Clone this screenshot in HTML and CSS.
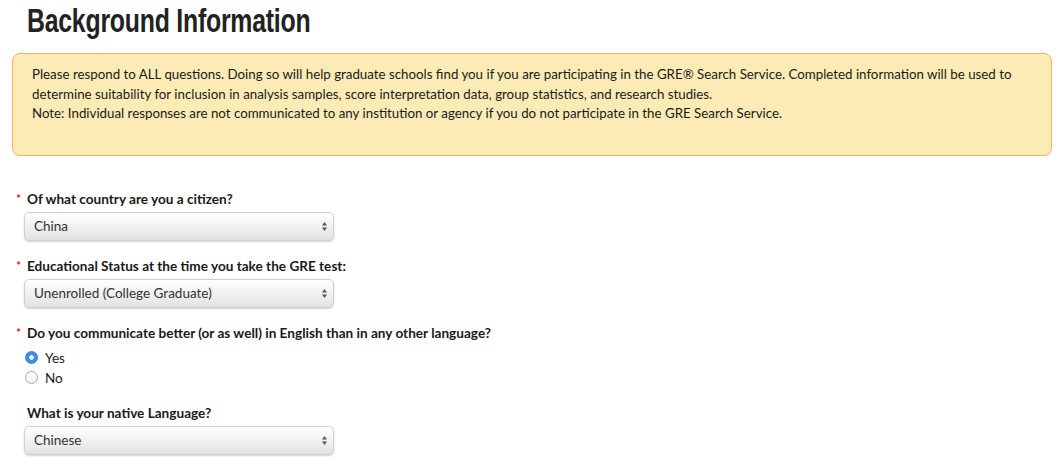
FILE: index.html
```html
<!DOCTYPE html>
<html>
<head>
<meta charset="utf-8">
<link rel="stylesheet" href="styles.css">
</head>
<body>
<div class="page">
  <h1 class="title"><span class="title-text">Background Information</span></h1>
  <div class="notice">
    <p>Please respond to ALL questions. Doing so will help graduate schools find you if you are participating in the GRE® Search Service. Completed information will be used to determine suitability for inclusion in analysis samples, score interpretation data, group statistics, and research studies.</p>
    <p>Note: Individual responses are not communicated to any institution or agency if you do not participate in the GRE Search Service.</p>
  </div>

  <div class="form">
    <div class="field">
      <div class="label"><span class="req">*</span>Of what country are you a citizen?</div>
      <div class="select"><span class="value">China</span>
        <svg class="arrows" width="5" height="9" viewBox="0 0 5 9"><path d="M2.5 0 L5 3.5 L0 3.5 Z M2.5 9 L5 5.5 L0 5.5 Z" fill="#555"/></svg>
      </div>
    </div>
    <div class="field">
      <div class="label"><span class="req">*</span>Educational Status at the time you take the GRE test:</div>
      <div class="select"><span class="value">Unenrolled (College Graduate)</span>
        <svg class="arrows" width="5" height="9" viewBox="0 0 5 9"><path d="M2.5 0 L5 3.5 L0 3.5 Z M2.5 9 L5 5.5 L0 5.5 Z" fill="#555"/></svg>
      </div>
    </div>
    <div class="field">
      <div class="label"><span class="req">*</span>Do you communicate better (or as well) in English than in any other language?</div>
      <div class="radios">
        <div class="radio-row"><span class="radio checked"></span>Yes</div>
        <div class="radio-row"><span class="radio"></span>No</div>
      </div>
    </div>
    <div class="field last">
      <div class="label"><span class="req"></span>What is your native Language?</div>
      <div class="select"><span class="value">Chinese</span>
        <svg class="arrows" width="5" height="9" viewBox="0 0 5 9"><path d="M2.5 0 L5 3.5 L0 3.5 Z M2.5 9 L5 5.5 L0 5.5 Z" fill="#555"/></svg>
      </div>
    </div>
  </div>
</div>
</body>
</html>
```

FILE: styles.css
```css
html, body {
  margin: 0;
  padding: 0;
  background: #ffffff;
}
body {
  font-family: "Lato", "Open Sans", sans-serif;
  color: #1c1c1c;
  width: 1062px;
  height: 464px;
  overflow: hidden;
}
.page {
  padding: 0 10px 0 12px;
}
.title {
  margin: 0 0 13px 0;
  padding-left: 15px;
  height: 40px;
  font-family: "Liberation Sans", sans-serif;
  font-weight: bold;
  font-size: 34px;
  line-height: 40px;
  color: #222222;
  white-space: nowrap;
}
.title-text {
  display: inline-block;
  transform: scaleX(0.73);
  transform-origin: 0 50%;
  letter-spacing: -0.3px;
}
.notice {
  background: #fdebb6;
  border: 1px solid #e9b36a;
  border-radius: 8px;
  padding: 11px 20px 31px 19px;
  font-size: 13.3px;
  line-height: 19.5px;
  color: #1a1a1a;
}
.notice p {
  margin: 0;
}
.form {
  padding-top: 34px;
}
.field {
  margin-bottom: 16px;
}
.field.last {
  margin-bottom: 0;
}
.label {
  display: flex;
  padding-left: 3px;
  height: 18px;
  line-height: 18px;
  font-size: 13.6px;
  font-weight: bold;
  color: #1a1a1a;
  margin-bottom: 4px;
}
.req {
  width: 12px;
  flex: none;
  color: #c8262c;
  font-size: 12px;
  font-weight: bold;
  padding-left: 1px;
  box-sizing: border-box;
}
.select {
  margin-left: 12px;
  width: 310px;
  height: 29px;
  box-sizing: border-box;
  border: 1px solid #cfcfcf;
  border-radius: 5px;
  background: linear-gradient(#ffffff, #f1f1f1 50%, #e2e2e2);
  box-shadow: 0 1px 2px rgba(0, 0, 0, 0.18);
  display: flex;
  align-items: center;
  justify-content: space-between;
  padding: 0 6px 0 9px;
  font-size: 13.5px;
  color: #333333;
}
.arrows {
  display: block;
}
.radios {
  padding-top: 2px;
  margin-left: 13px;
}
.radio-row {
  display: flex;
  align-items: center;
  height: 20px;
  font-size: 13.5px;
  color: #1a1a1a;
}
.radio {
  width: 13px;
  height: 13px;
  box-sizing: border-box;
  border-radius: 50%;
  border: 1px solid #a9a9a9;
  background: linear-gradient(#ffffff, #f2f2f2);
  margin-right: 7px;
  flex: none;
}
.radio.checked {
  border-color: #2f7fd8;
  background: radial-gradient(circle, #ffffff 0 2px, #3b8ee6 2.5px);
}
```
